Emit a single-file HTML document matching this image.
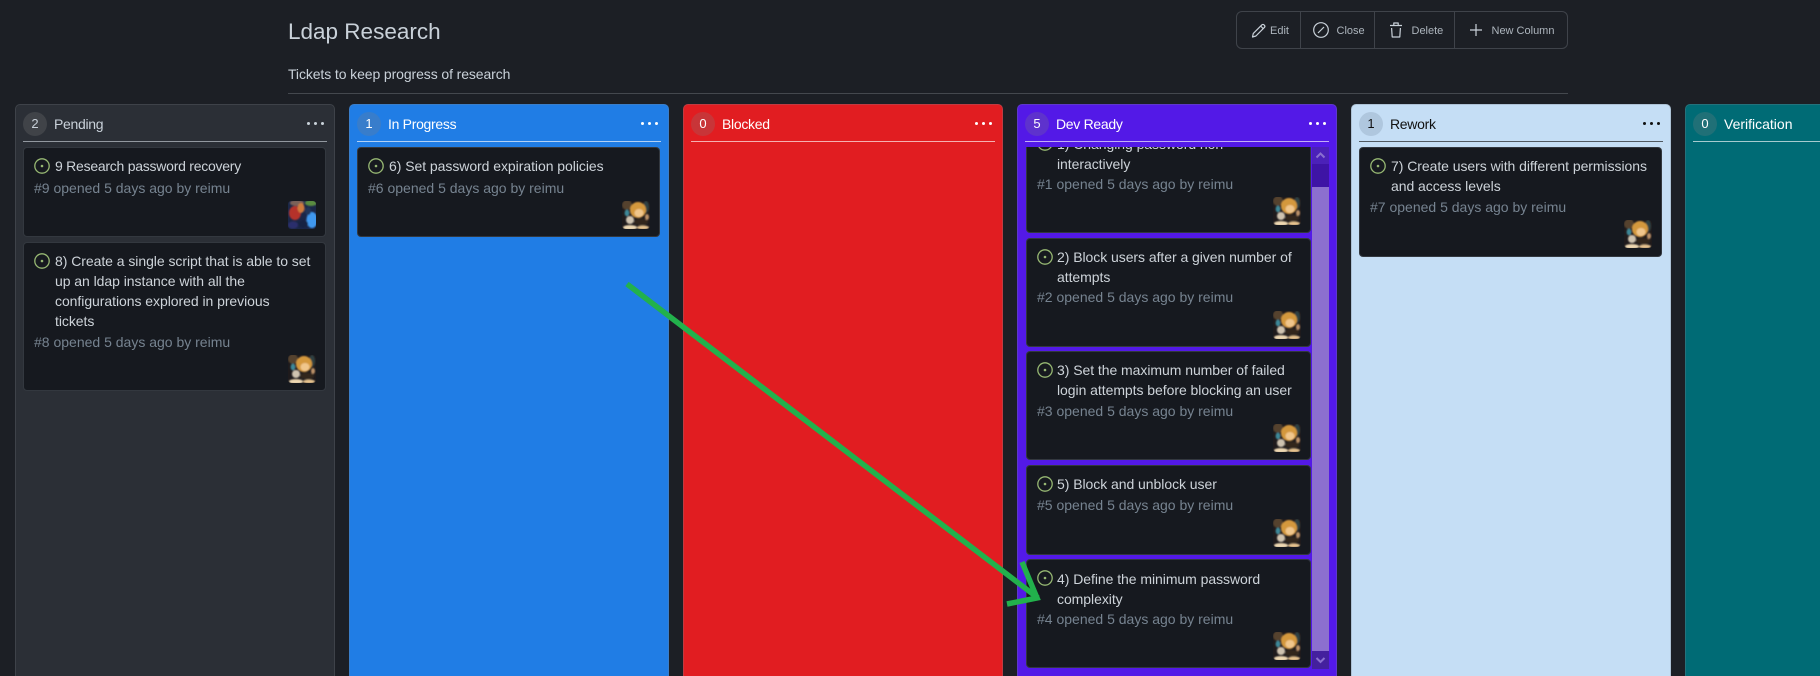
<!DOCTYPE html>
<html><head><meta charset="utf-8"><title>Ldap Research</title>
<style>
html,body{margin:0;padding:0;width:1820px;height:676px;overflow:hidden;background:#1c1f25;font-family:"Liberation Sans",sans-serif;}
#w{position:absolute;left:0;top:0;width:1820px;height:676px;overflow:hidden;background:#1c1f25}
.a{position:absolute;white-space:nowrap}
.col{position:absolute;top:104px;height:572px;width:320px;border-radius:5px 5px 0 0;box-sizing:border-box;border:1px solid rgba(120,130,140,.3);border-bottom:0;color:#fff;overflow:hidden}
.badge{position:absolute;left:7px;top:7px;width:24px;height:24px;border-radius:50%;background:rgba(128,128,128,.25);font-size:13px;line-height:23px;text-align:center}
.ct{position:absolute;left:38px;top:9px;font-size:14px;line-height:20px;white-space:nowrap;letter-spacing:-.3px}
.hr{position:absolute;left:7px;right:7px;top:36px;height:1px;background:currentColor;opacity:.65}
.dots{position:absolute;right:9px;top:17px;width:18px;height:3px}
.dots i{position:absolute;top:0;width:3px;height:3px;border-radius:50%;background:currentColor}
.card{position:absolute;left:7px;width:303px;background:#16191f;border:1px solid rgba(120,130,140,.3);box-sizing:border-box;border-radius:4px;color:#c9d1d9}
.ic{position:absolute;left:10px;top:10px;width:16px;height:16px}
.tt{position:absolute;left:31px;top:8px;font-size:14px;line-height:20px;color:#cdd3d9;white-space:nowrap;letter-spacing:-.05px}
.mt{position:absolute;left:10px;font-size:14px;line-height:20px;color:#768390;white-space:nowrap}
.av{position:absolute;width:28px;height:28px;border-radius:3px}
.btn{position:absolute;font-size:11px;line-height:14px;color:#adb5bd;top:24px;white-space:nowrap}
.d{left:8px;width:285px}
.d .tt{left:30px}
</style></head><body>
<div id="w">
<svg width="0" height="0" style="position:absolute">
<defs>
<filter id="b" x="-10%" y="-10%" width="120%" height="120%"><feGaussianBlur stdDeviation="0.8"/></filter>
<symbol id="ti" viewBox="0 0 16 16"><circle cx="8" cy="8" r="7.2" fill="none" stroke="#97b873" stroke-width="1.3"/><circle cx="8" cy="8" r="1.3" fill="#97b873"/></symbol>
<symbol id="blonde" viewBox="0 0 28 28">
<rect width="28" height="28" fill="#1e1a1c"/>
<g filter="url(#b)">
<ellipse cx="5" cy="4" rx="5" ry="5" fill="#54432f"/>
<ellipse cx="24" cy="6" rx="3" ry="6" fill="#2f4142"/>
<ellipse cx="5" cy="12" rx="2.4" ry="3.4" fill="#3d8898"/>
<ellipse cx="16" cy="9" rx="8" ry="8" fill="#d4983e"/>
<ellipse cx="17" cy="12" rx="4.5" ry="4" fill="#f0c68c"/>
<ellipse cx="8" cy="19" rx="4" ry="4" fill="#cfc3b0"/>
<ellipse cx="19" cy="21" rx="7" ry="3" fill="#33261c"/>
<ellipse cx="8" cy="26.5" rx="7" ry="2.4" fill="#eed8b2"/>
<ellipse cx="21" cy="26.5" rx="6" ry="2" fill="#e6c28e"/>
<ellipse cx="25" cy="16" rx="2" ry="3" fill="#bb9168"/>
</g>
</symbol>
<symbol id="dark" viewBox="0 0 28 28">
<rect width="28" height="28" fill="#1b2748"/>
<g filter="url(#b)">
<ellipse cx="9" cy="2" rx="7" ry="3" fill="#7a6258"/>
<ellipse cx="23" cy="2" rx="6" ry="3" fill="#5a8c40"/>
<ellipse cx="7" cy="12" rx="6" ry="7" fill="#b5322c"/>
<ellipse cx="13" cy="7" rx="3.5" ry="5" fill="#d07a3e"/>
<ellipse cx="24" cy="19" rx="5.5" ry="8" fill="#3f98ee"/>
<ellipse cx="20" cy="10" rx="3" ry="4" fill="#223458"/>
<ellipse cx="15" cy="23" rx="5" ry="4" fill="#162042"/>
<ellipse cx="5" cy="24" rx="5" ry="3.5" fill="#2c2e6c"/>
</g>
</symbol>
</defs>
</svg>

<div class="a" style="left:288px;top:17px;font-size:22.5px;line-height:30px;color:#c9d1d9">Ldap Research</div>
<div class="a" style="left:288px;top:64px;font-size:14px;line-height:20px;color:#c9d1d9;letter-spacing:-.1px">Tickets to keep progress of research</div>
<div class="a" style="left:288px;top:93px;width:1280px;height:1px;background:#44484e"></div>

<div class="a" style="left:1236px;top:11px;width:332px;height:38px;box-sizing:border-box;border:1px solid #3f434a;border-radius:6px"></div>
<div class="a" style="left:1300px;top:12px;width:1px;height:36px;background:#3f434a"></div>
<div class="a" style="left:1374px;top:12px;width:1px;height:36px;background:#3f434a"></div>
<div class="a" style="left:1454px;top:12px;width:1px;height:36px;background:#3f434a"></div>
<svg class="a" style="left:1250px;top:22px" width="17" height="17" viewBox="0 0 17 17" fill="none" stroke="#c9d1d9" stroke-width="1.2" stroke-linejoin="round"><path d="M2.5 15l.8-3.6L11.8 2.9a1.5 1.5 0 0 1 2.2 0l.4.4a1.5 1.5 0 0 1 0 2.1L5.9 14z"/><path d="M10.6 4l2.8 2.8"/></svg>
<span class="btn" style="left:1270px">Edit</span>
<svg class="a" style="left:1313px;top:22px" width="16" height="16" viewBox="0 0 16 16" fill="none" stroke="#c9d1d9" stroke-width="1.2"><circle cx="8" cy="8" r="7.3"/><path d="M11 5l-6 6"/></svg>
<span class="btn" style="left:1336.5px">Close</span>
<svg class="a" style="left:1389px;top:22px" width="14" height="16" viewBox="0 0 14 16" fill="none" stroke="#c9d1d9" stroke-width="1.2" stroke-linejoin="round"><path d="M1 3.5h12M4.8 3.5V1h4.4v2.5M2.6 6l.6 9h7.6l.6-9"/></svg>
<span class="btn" style="left:1411.5px">Delete</span>
<svg class="a" style="left:1470px;top:24px" width="12" height="12" viewBox="0 0 12 12" fill="none" stroke="#c9d1d9" stroke-width="1.2"><path d="M6 0v12M0 6h12"/></svg>
<span class="btn" style="left:1491.5px">New Column</span>

<!-- Pending -->
<div class="col" style="left:15px;background:#2b2f36;color:#c9d1d9;border-color:#3e4249">
<div class="badge">2</div><div class="ct">Pending</div>
<div class="dots"><i style="left:0"></i><i style="left:7px"></i><i style="left:14px"></i></div>
<div class="hr"></div>
<div class="card" style="top:42px;height:90px">
<svg class="ic"><use href="#ti"/></svg>
<div class="tt" style="letter-spacing:-.25px">9 Research password recovery</div>
<div class="mt" style="top:30px">#9 opened 5 days ago by reimu</div>
<svg class="av" style="left:264px;top:53px" viewBox="0 0 28 28"><use href="#dark"/></svg>
</div>
<div class="card" style="top:137px;height:149px">
<svg class="ic"><use href="#ti"/></svg>
<div class="tt">8) Create a single script that is able to set<br>up an ldap instance with all the<br>configurations explored in previous<br>tickets</div>
<div class="mt" style="top:89px">#8 opened 5 days ago by reimu</div>
<svg class="av" style="left:264px;top:112px" viewBox="0 0 28 28"><use href="#blonde"/></svg>
</div>
</div>

<!-- In Progress -->
<div class="col" style="left:349px;background:#207de5">
<div class="badge">1</div><div class="ct">In Progress</div>
<div class="dots"><i style="left:0"></i><i style="left:7px"></i><i style="left:14px"></i></div>
<div class="hr"></div>
<div class="card" style="top:42px;height:90px">
<svg class="ic"><use href="#ti"/></svg>
<div class="tt">6) Set password expiration policies</div>
<div class="mt" style="top:30px">#6 opened 5 days ago by reimu</div>
<svg class="av" style="left:264px;top:53px" viewBox="0 0 28 28"><use href="#blonde"/></svg>
</div>
</div>

<!-- Blocked -->
<div class="col" style="left:683px;background:#e11d21">
<div class="badge">0</div><div class="ct">Blocked</div>
<div class="dots"><i style="left:0"></i><i style="left:7px"></i><i style="left:14px"></i></div>
<div class="hr"></div>
</div>

<!-- Dev Ready -->
<div class="col" style="left:1017px;background:#5319e7">
<div class="badge">5</div><div class="ct">Dev Ready</div>
<div class="dots"><i style="left:0"></i><i style="left:7px"></i><i style="left:14px"></i></div>
<div class="hr"></div>
<div style="position:absolute;left:0;top:42px;width:318px;height:522px;overflow:hidden">
<div class="card d" style="top:-23px;height:109px">
<svg class="ic"><use href="#ti"/></svg>
<div class="tt" style="top:9px">1) Changing password non<br>interactively</div>
<div class="mt" style="top:49px">#1 opened 5 days ago by reimu</div>
<svg class="av" style="left:246px;top:72px" viewBox="0 0 28 28"><use href="#blonde"/></svg>
</div>
<div class="card d" style="top:91px;height:109px">
<svg class="ic"><use href="#ti"/></svg>
<div class="tt">2) Block users after a given number of<br>attempts</div>
<div class="mt" style="top:48px">#2 opened 5 days ago by reimu</div>
<svg class="av" style="left:246px;top:72px" viewBox="0 0 28 28"><use href="#blonde"/></svg>
</div>
<div class="card d" style="top:204px;height:109px">
<svg class="ic"><use href="#ti"/></svg>
<div class="tt">3) Set the maximum number of failed<br>login attempts before blocking an user</div>
<div class="mt" style="top:49px">#3 opened 5 days ago by reimu</div>
<svg class="av" style="left:246px;top:72px" viewBox="0 0 28 28"><use href="#blonde"/></svg>
</div>
<div class="card d" style="top:318px;height:90px">
<svg class="ic"><use href="#ti"/></svg>
<div class="tt">5) Block and unblock user</div>
<div class="mt" style="top:29px">#5 opened 5 days ago by reimu</div>
<svg class="av" style="left:246px;top:53px" viewBox="0 0 28 28"><use href="#blonde"/></svg>
</div>
<div class="card d" style="top:412px;height:109px">
<svg class="ic"><use href="#ti"/></svg>
<div class="tt" style="top:9px">4) Define the minimum password<br>complexity</div>
<div class="mt" style="top:49px">#4 opened 5 days ago by reimu</div>
<svg class="av" style="left:246px;top:72px" viewBox="0 0 28 28"><use href="#blonde"/></svg>
</div>
</div>
<div style="position:absolute;left:294px;top:42px;width:17px;height:522px;background:#8c6fcf"></div>
<div style="position:absolute;left:294px;top:42px;width:17px;height:40px;background:#3e14a5"></div>
<div style="position:absolute;left:294px;top:42px;width:17px;height:17px;background:#4b21b8"></div>
<div style="position:absolute;left:294px;top:546px;width:17px;height:18px;background:#44209e"></div>
<svg style="position:absolute;left:294px;top:42px" width="17" height="17" viewBox="0 0 17 17" fill="none" stroke="#8a6fd0" stroke-width="2"><path d="M4.5 10.5l4-4 4 4"/></svg>
<svg style="position:absolute;left:294px;top:546px" width="17" height="18" viewBox="0 0 17 18" fill="none" stroke="#8a6fd0" stroke-width="2"><path d="M4.5 7l4 4 4-4"/></svg>
</div>

<!-- Rework -->
<div class="col" style="left:1351px;background:#c5def5;color:#111">
<div class="badge" style="background:rgba(90,110,130,.2)">1</div><div class="ct">Rework</div>
<div class="dots"><i style="left:0"></i><i style="left:7px"></i><i style="left:14px"></i></div>
<div class="hr"></div>
<div class="card" style="top:42px;height:110px">
<svg class="ic"><use href="#ti"/></svg>
<div class="tt">7) Create users with different permissions<br>and access levels</div>
<div class="mt" style="top:49px">#7 opened 5 days ago by reimu</div>
<svg class="av" style="left:264px;top:72px" viewBox="0 0 28 28"><use href="#blonde"/></svg>
</div>
</div>

<!-- Verification -->
<div class="col" style="left:1685px;width:330px;background:#006b75">
<div class="badge">0</div><div class="ct" style="letter-spacing:0">Verification</div>
<div class="hr"></div>
</div>

<!-- Arrow annotation -->
<svg class="a" style="left:0;top:0;pointer-events:none" width="1820" height="676" fill="none" stroke="#22b14c" stroke-width="5.5" stroke-linecap="butt">
<path d="M627 284L1038 598"/>
<path d="M1022 562L1037 598L1007 604"/>
</svg>
</div>
</body></html>
